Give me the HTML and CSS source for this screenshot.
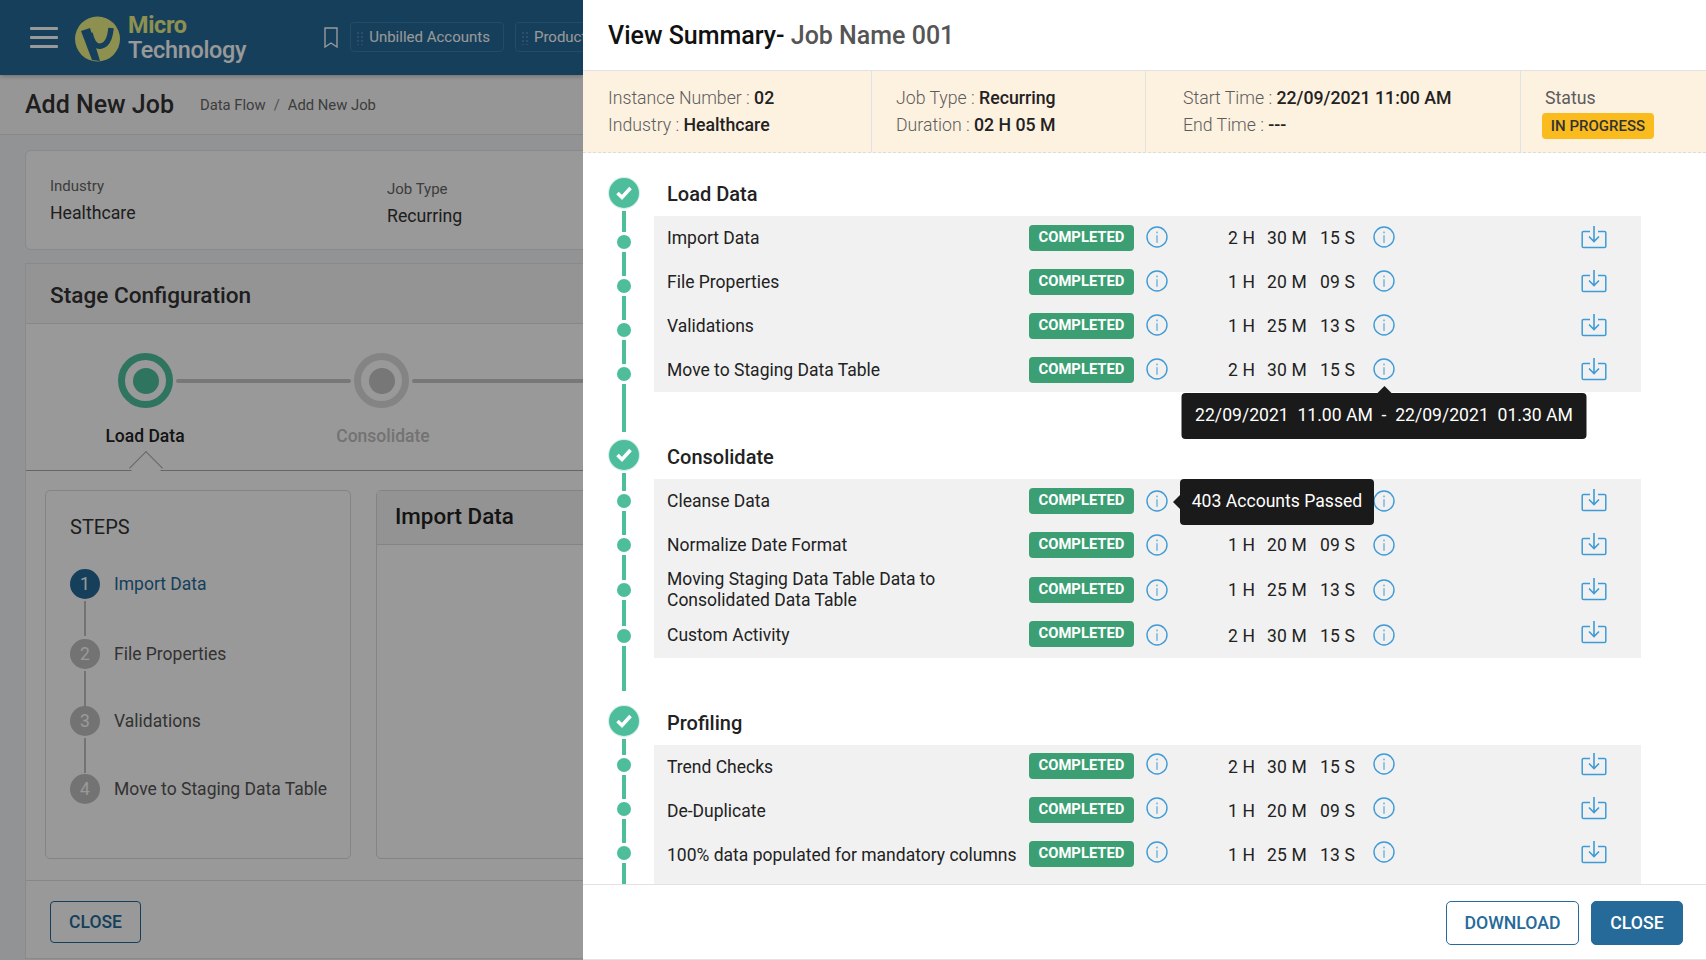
FILE: index.html
```html
<!DOCTYPE html>
<html lang="en">
<head>
    <meta charset="UTF-8">
    <meta name="viewport" content="width=device-width, initial-scale=1.0">
    <title>Add New Job</title>
    <link rel="stylesheet" href="styles.css">
</head>
<body>
    <svg class="sprite" width="0" height="0">
        <symbol id="info" viewBox="0 0 22 22">
            <circle cx="11" cy="11" r="10" fill="none" stroke="#3f9bd6" stroke-width="1.4"/>
            <rect x="10.3" y="9.2" width="1.4" height="7.6" fill="#6fb3de"/>
            <rect x="10.2" y="5.6" width="1.6" height="1.7" fill="#6fb3de"/>
        </symbol>
        <symbol id="download" viewBox="0 0 26 24">
            <path d="M9 6.5H2.5a1.3 1.3 0 0 0-1.3 1.3v13.4a1.3 1.3 0 0 0 1.3 1.3h21a1.3 1.3 0 0 0 1.3-1.3V7.8a1.3 1.3 0 0 0-1.3-1.3H17" fill="none" stroke="#3f9bd6" stroke-width="1.5"/>
            <path d="M13 1v15.5M8 11.5l5 5 5-5" fill="none" stroke="#3f9bd6" stroke-width="1.6"/>
        </symbol>
    </svg>

    <div class="page">
        <header class="topbar">
            <div class="hamburger"><span></span><span></span><span></span></div>
            <svg class="logo-mark" width="45" height="46" viewBox="0 0 45 46">
                <circle cx="22.5" cy="23" r="22.5" fill="#edf186"/>
                <path d="M6 15l9-3 10 33-8-1z" fill="#256a99"/>
                <path d="M15 17c2 9 6 14 11 13 6-1 9-7 10-18" fill="none" stroke="#256a99" stroke-width="5.5"/>
            </svg>
            <div class="logo-text">
                <span class="logo-micro">Micro</span>
                <span class="logo-tech">Technology</span>
            </div>
            <svg class="bookmark" width="16" height="22" viewBox="0 0 16 22">
                <path d="M2 1h12v19l-6-4-6 4z" fill="none" stroke="#fff" stroke-width="1.4"/>
            </svg>
            <div class="chip"><span class="grip"></span>Unbilled Accounts</div>
            <div class="chip"><span class="grip"></span>Product</div>
        </header>

        <div class="subheader">
            <h1>Add New Job</h1>
            <div class="breadcrumb">Data Flow<span class="crumb-sep">/</span>Add New Job</div>
        </div>

        <div class="card job-info">
            <div class="job-field">
                <label>Industry</label>
                <span>Healthcare</span>
            </div>
            <div class="job-field job-field-low">
                <label>Job Type</label>
                <span>Recurring</span>
            </div>
        </div>

        <div class="card stage-card">
            <div class="stage-title">Stage Configuration</div>
            <div class="stepper">
                <div class="stepper-track">
                    <div class="stage-dot stage-dot-active"></div>
                    <div class="stage-line"></div>
                    <div class="stage-dot"></div>
                    <div class="stage-line stage-line-long"></div>
                </div>
                <div class="stepper-labels">
                    <span class="stage-label stage-label-active">Load Data</span>
                    <span class="stage-label">Consolidate</span>
                </div>
                <div class="stage-caret"></div>
            </div>
            <div class="stage-body">
                <div class="steps-card">
                    <h3>STEPS</h3>
                    <div class="step step-active"><span class="step-num">1</span>Import Data</div>
                    <div class="step"><span class="step-num">2</span>File Properties</div>
                    <div class="step"><span class="step-num">3</span>Validations</div>
                    <div class="step step-last"><span class="step-num">4</span>Move to Staging Data Table</div>
                </div>
                <div class="import-card">
                    <div class="import-title">Import Data</div>
                </div>
            </div>
            <div class="stage-footer">
                <button class="btn-close-dim">CLOSE</button>
            </div>
        </div>
    </div>

    <div class="overlay"></div>

    <aside class="drawer">
        <div class="drawer-header">View Summary- <span class="job-name">Job Name 001</span></div>

        <div class="summary">
            <div class="summary-cell cell-a">
                <div>Instance Number : <b>02</b></div>
                <div>Industry : <b>Healthcare</b></div>
            </div>
            <div class="summary-cell cell-b">
                <div>Job Type : <b>Recurring</b></div>
                <div>Duration : <b>02 H 05 M</b></div>
            </div>
            <div class="summary-cell cell-c">
                <div>Start Time : <b>22/09/2021 11:00 AM</b></div>
                <div>End Time : <b>---</b></div>
            </div>
            <div class="summary-cell cell-d">
                <div>Status</div>
                <span class="badge-progress">IN PROGRESS</span>
            </div>
        </div>

        <div class="drawer-body">
            <section class="stage stage-first">
                <div class="stage-head">
                    <div class="rail"><span class="check"><svg width="18" height="16" viewBox="0 0 18 16"><path d="M2.5 8l4.5 4.5L15.5 3" fill="none" stroke="#fff" stroke-width="3.6"/></svg></span><span class="seg"></span></div>
                    <h4>Load Data</h4>
                </div>
                <div class="row">
                    <div class="rail"><span class="seg"></span><span class="dot"></span><span class="seg"></span></div>
                    <div class="row-body">
                        <div class="row-name">Import Data</div>
                        <span class="badge">COMPLETED</span>
                        <span class="info-wrap"><svg class="icon"><use href="#info"/></svg></span>
                        <div class="time"><span>2 H</span><span>30 M</span><span>15 S</span></div>
                        <span class="info-wrap"><svg class="icon"><use href="#info"/></svg></span>
                        <svg class="icon-dl"><use href="#download"/></svg>
                    </div>
                </div>
                <div class="row">
                    <div class="rail"><span class="seg"></span><span class="dot"></span><span class="seg"></span></div>
                    <div class="row-body">
                        <div class="row-name">File Properties</div>
                        <span class="badge">COMPLETED</span>
                        <span class="info-wrap"><svg class="icon"><use href="#info"/></svg></span>
                        <div class="time"><span>1 H</span><span>20 M</span><span>09 S</span></div>
                        <span class="info-wrap"><svg class="icon"><use href="#info"/></svg></span>
                        <svg class="icon-dl"><use href="#download"/></svg>
                    </div>
                </div>
                <div class="row">
                    <div class="rail"><span class="seg"></span><span class="dot"></span><span class="seg"></span></div>
                    <div class="row-body">
                        <div class="row-name">Validations</div>
                        <span class="badge">COMPLETED</span>
                        <span class="info-wrap"><svg class="icon"><use href="#info"/></svg></span>
                        <div class="time"><span>1 H</span><span>25 M</span><span>13 S</span></div>
                        <span class="info-wrap"><svg class="icon"><use href="#info"/></svg></span>
                        <svg class="icon-dl"><use href="#download"/></svg>
                    </div>
                </div>
                <div class="row">
                    <div class="rail"><span class="seg"></span><span class="dot"></span><span class="seg"></span></div>
                    <div class="row-body">
                        <div class="row-name">Move to Staging Data Table</div>
                        <span class="badge">COMPLETED</span>
                        <span class="info-wrap"><svg class="icon"><use href="#info"/></svg></span>
                        <div class="time"><span>2 H</span><span>30 M</span><span>15 S</span></div>
                        <span class="info-wrap">
                            <svg class="icon"><use href="#info"/></svg>
                            <span class="tip tip-below">22/09/2021&nbsp; 11.00 AM &nbsp;-&nbsp; 22/09/2021&nbsp; 01.30 AM</span>
                        </span>
                        <svg class="icon-dl"><use href="#download"/></svg>
                    </div>
                </div>
                <div class="tail"><div class="rail"><span class="seg"></span></div></div>
            </section>

            <section class="stage stage-second">
                <div class="stage-head">
                    <div class="rail"><span class="check"><svg width="18" height="16" viewBox="0 0 18 16"><path d="M2.5 8l4.5 4.5L15.5 3" fill="none" stroke="#fff" stroke-width="3.6"/></svg></span><span class="seg"></span></div>
                    <h4>Consolidate</h4>
                </div>
                <div class="row">
                    <div class="rail"><span class="seg"></span><span class="dot"></span><span class="seg"></span></div>
                    <div class="row-body">
                        <div class="row-name">Cleanse Data</div>
                        <span class="badge">COMPLETED</span>
                        <span class="info-wrap">
                            <svg class="icon"><use href="#info"/></svg>
                            <span class="tip tip-right">403 Accounts Passed</span>
                        </span>
                        <div class="time"></div>
                        <span class="info-wrap"><svg class="icon"><use href="#info"/></svg></span>
                        <svg class="icon-dl"><use href="#download"/></svg>
                    </div>
                </div>
                <div class="row">
                    <div class="rail"><span class="seg"></span><span class="dot"></span><span class="seg"></span></div>
                    <div class="row-body">
                        <div class="row-name">Normalize Date Format</div>
                        <span class="badge">COMPLETED</span>
                        <span class="info-wrap"><svg class="icon"><use href="#info"/></svg></span>
                        <div class="time"><span>1 H</span><span>20 M</span><span>09 S</span></div>
                        <span class="info-wrap"><svg class="icon"><use href="#info"/></svg></span>
                        <svg class="icon-dl"><use href="#download"/></svg>
                    </div>
                </div>
                <div class="row row-tall">
                    <div class="rail"><span class="seg"></span><span class="dot"></span><span class="seg"></span></div>
                    <div class="row-body">
                        <div class="row-name row-name-wrap">Moving Staging Data Table Data to Consolidated Data Table</div>
                        <span class="badge">COMPLETED</span>
                        <span class="info-wrap"><svg class="icon"><use href="#info"/></svg></span>
                        <div class="time"><span>1 H</span><span>25 M</span><span>13 S</span></div>
                        <span class="info-wrap"><svg class="icon"><use href="#info"/></svg></span>
                        <svg class="icon-dl"><use href="#download"/></svg>
                    </div>
                </div>
                <div class="row row-end">
                    <div class="rail"><span class="seg"></span><span class="dot"></span><span class="seg"></span></div>
                    <div class="row-body row-body-raised">
                        <div class="row-name">Custom Activity</div>
                        <span class="badge">COMPLETED</span>
                        <span class="info-wrap"><svg class="icon"><use href="#info"/></svg></span>
                        <div class="time"><span>2 H</span><span>30 M</span><span>15 S</span></div>
                        <span class="info-wrap"><svg class="icon"><use href="#info"/></svg></span>
                        <svg class="icon-dl"><use href="#download"/></svg>
                    </div>
                </div>
                <div class="tail"><div class="rail"><span class="seg"></span></div></div>
            </section>

            <section class="stage stage-third">
                <div class="stage-head">
                    <div class="rail"><span class="check"><svg width="18" height="16" viewBox="0 0 18 16"><path d="M2.5 8l4.5 4.5L15.5 3" fill="none" stroke="#fff" stroke-width="3.6"/></svg></span><span class="seg"></span></div>
                    <h4>Profiling</h4>
                </div>
                <div class="row">
                    <div class="rail"><span class="seg"></span><span class="dot"></span><span class="seg"></span></div>
                    <div class="row-body row-body-raised">
                        <div class="row-name">Trend Checks</div>
                        <span class="badge">COMPLETED</span>
                        <span class="info-wrap"><svg class="icon"><use href="#info"/></svg></span>
                        <div class="time"><span>2 H</span><span>30 M</span><span>15 S</span></div>
                        <span class="info-wrap"><svg class="icon"><use href="#info"/></svg></span>
                        <svg class="icon-dl"><use href="#download"/></svg>
                    </div>
                </div>
                <div class="row">
                    <div class="rail"><span class="seg"></span><span class="dot"></span><span class="seg"></span></div>
                    <div class="row-body row-body-raised">
                        <div class="row-name">De-Duplicate</div>
                        <span class="badge">COMPLETED</span>
                        <span class="info-wrap"><svg class="icon"><use href="#info"/></svg></span>
                        <div class="time"><span>1 H</span><span>20 M</span><span>09 S</span></div>
                        <span class="info-wrap"><svg class="icon"><use href="#info"/></svg></span>
                        <svg class="icon-dl"><use href="#download"/></svg>
                    </div>
                </div>
                <div class="row">
                    <div class="rail"><span class="seg"></span><span class="dot"></span><span class="seg"></span></div>
                    <div class="row-body row-body-raised">
                        <div class="row-name">100% data populated for mandatory columns</div>
                        <span class="badge">COMPLETED</span>
                        <span class="info-wrap"><svg class="icon"><use href="#info"/></svg></span>
                        <div class="time"><span>1 H</span><span>25 M</span><span>13 S</span></div>
                        <span class="info-wrap"><svg class="icon"><use href="#info"/></svg></span>
                        <svg class="icon-dl"><use href="#download"/></svg>
                    </div>
                </div>
                <div class="row">
                    <div class="rail"><span class="seg"></span></div>
                    <div class="row-body row-body-raised">
                        <div class="row-name"></div>
                        <span class="badge">COMPLETED</span>
                    </div>
                </div>
            </section>
        </div>

        <div class="drawer-footer">
            <button class="btn-outline">DOWNLOAD</button>
            <button class="btn-solid">CLOSE</button>
        </div>
    </aside>
</body>
</html>
```

FILE: styles.css
```css
* {
    box-sizing: border-box;
}
body {
    font-family: Roboto, "Liberation Sans", sans-serif;
    background-color: #f4f6f9;
    margin: 0;
    width: 1706px;
    height: 960px;
    overflow: hidden;
    position: relative;
    color: #222;
}
.sprite {
    display: block;
    height: 0;
}
.page {
    width: 583px;
    height: 960px;
    overflow: hidden;
}

/* top bar */
.topbar {
    height: 75px;
    background-color: #256a99;
    display: flex;
    align-items: center;
    padding-left: 30px;
    box-shadow: 0 1px 5px rgba(0, 0, 0, 0.3);
    position: relative;
}
.hamburger {
    width: 28px;
    height: 21px;
    display: flex;
    flex-direction: column;
    justify-content: space-between;
    flex: none;
}
.hamburger span {
    height: 3px;
    background-color: #fff;
    border-radius: 1px;
}
.logo-mark {
    margin-left: 17px;
    margin-top: 3px;
    flex: none;
}
.logo-text {
    margin-left: 8px;
    display: flex;
    flex-direction: column;
    font-weight: 500;
    font-size: 23.4px;
    line-height: 25px;
    margin-top: 1px;
    letter-spacing: -0.3px;
    flex: none;
}
.logo-micro {
    color: #edf186;
    font-weight: 700;
}
.logo-tech {
    color: #fff;
}
.bookmark {
    margin-left: 77px;
    margin-top: 1px;
    flex: none;
}
.chip {
    height: 30px;
    margin-left: 11px;
    padding: 0 13px 0 18px;
    border: 1px solid #3a7fae;
    border-radius: 4px;
    color: #fff;
    font-size: 15px;
    line-height: 29px;
    white-space: nowrap;
    position: relative;
    margin-top: -1px;
    flex: none;
}
.chip + .chip {
    margin-left: 11px;
}
.grip {
    position: absolute;
    left: 5px;
    top: 8px;
    width: 7px;
    height: 14px;
    background-image: radial-gradient(#4a86b0 1.2px, transparent 1.3px);
    background-size: 4px 4px;
}

/* page heading */
.subheader {
    height: 60px;
    background-color: #fbfbfb;
    border-bottom: 1px solid #e2e2e2;
    display: flex;
    align-items: center;
    padding-left: 25px;
}
.subheader h1 {
    margin: 0;
    font-size: 25px;
    font-weight: 500;
    color: #333;
}
.breadcrumb {
    margin-left: 26px;
    font-size: 14.8px;
    color: #666;
}
.crumb-sep {
    margin: 0 8px;
    color: #888;
}
.card {
    background-color: #fff;
    border: 1px solid #e6e6e6;
    border-radius: 6px;
    margin: 0 0 0 25px;
    width: 700px;
}
.job-info {
    margin-top: 15px;
    height: 100px;
    display: flex;
    padding: 26px 0 0 24px;
}
.job-field {
    width: 338px;
    display: flex;
    flex-direction: column;
    gap: 8px;
}
.job-field-low {
    padding-top: 3px;
}
.job-field label {
    font-size: 15px;
    color: #666;
}
.job-field span {
    font-size: 17.7px;
    color: #333;
}

/* stage configuration */
.stage-card {
    margin-top: 13px;
    height: 696px;
    border-radius: 0;
}
.stage-title {
    height: 60px;
    background-color: #f7f7f7;
    border-bottom: 1px solid #e2e2e2;
    padding: 18px 24px 0;
    font-size: 22.6px;
    font-weight: 500;
    color: #333;
}
.stepper {
    height: 147px;
    padding: 29px 0 0 92px;
    border-bottom: 1px solid #aaa;
    position: relative;
}
.stepper-track {
    display: flex;
    align-items: center;
}
.stage-dot {
    width: 55px;
    height: 55px;
    border-radius: 50%;
    border: 7px solid #dcdcdc;
    display: flex;
    align-items: center;
    justify-content: center;
    flex: none;
}
.stage-dot::after {
    content: "";
    width: 26px;
    height: 26px;
    border-radius: 50%;
    background-color: #c6c6c6;
}
.stage-dot-active {
    border-color: #4fc29f;
}
.stage-dot-active::after {
    background-color: #4fc29f;
}
.stage-line {
    width: 175px;
    height: 4px;
    margin: 0 3px;
    background-color: #c8c8c8;
    border-radius: 2px;
    flex: none;
}
.stage-line-long {
    width: 400px;
}
.stepper-labels {
    display: flex;
    margin: 18px 0 0 -92px;
}
.stage-label {
    width: 238px;
    text-align: center;
    font-size: 17.5px;
    font-weight: 500;
    color: #c0c0c0;
}
.stage-label-active {
    color: #222;
}
.stage-caret {
    position: absolute;
    left: 108px;
    bottom: -10px;
    width: 24px;
    height: 24px;
    background-color: #fff;
    border-left: 1px solid #aaa;
    border-top: 1px solid #aaa;
    transform: rotate(45deg);
}
.stage-body {
    display: flex;
    gap: 25px;
    padding: 19px 0 20px 19px;
    height: 410px;
    border-bottom: 1px solid #e2e2e2;
    position: relative;
}
.steps-card,
.import-card {
    height: 369px;
    border: 1px solid #ddd;
    border-radius: 5px;
}
.steps-card {
    width: 306px;
    flex: none;
    padding: 24px 0 0 24px;
}
.steps-card h3 {
    margin: 0 0 30px;
    font-size: 20px;
    font-weight: 400;
    line-height: 24px;
    color: #333;
}
.step {
    display: flex;
    align-items: center;
    height: 30px;
    margin-bottom: 37.5px;
    font-size: 17.5px;
    color: #555;
    position: relative;
}
.step-active {
    margin-bottom: 39.5px;
}
.step-last {
    margin-bottom: 0;
}
.step::after {
    content: "";
    position: absolute;
    left: 14px;
    top: 32px;
    width: 2px;
    height: 35px;
    background-color: #c0c0c0;
}
.step-last::after {
    display: none;
}
.step-num {
    width: 30px;
    height: 30px;
    border-radius: 50%;
    background-color: #c0c0c0;
    color: #fff;
    text-align: center;
    line-height: 30px;
    margin-right: 14px;
    flex: none;
}
.step-active {
    color: #256a99;
}
.step-active .step-num {
    background-color: #256a99;
}
.import-card {
    width: 600px;
    flex: none;
}
.import-title {
    height: 54px;
    background-color: #f5f5f5;
    border-bottom: 1px solid #ddd;
    padding: 12px 0 0 18px;
    font-size: 22.4px;
    font-weight: 500;
    color: #222;
}
.stage-footer {
    padding: 20px 0 0 24px;
}
.btn-close-dim {
    width: 91px;
    height: 42px;
    background-color: transparent;
    border: 1px solid #256a99;
    border-radius: 4px;
    color: #256a99;
    font-family: inherit;
    font-size: 17.5px;
    font-weight: 500;
}
.overlay {
    position: absolute;
    left: 0;
    top: 0;
    width: 100%;
    height: 100%;
    background-color: rgba(0, 0, 0, 0.4);
}

/* summary drawer */
.drawer {
    position: absolute;
    left: 583px;
    top: 0;
    width: 1123px;
    height: 960px;
    background-color: #fff;
    display: flex;
    flex-direction: column;
    border-bottom: 1px solid #e2e2e2;
}
.drawer-header {
    height: 71px;
    flex: none;
    padding: 21px 0 0 25px;
    font-size: 25px;
    line-height: 30px;
    font-weight: 500;
    color: #111;
    border-bottom: 1px solid #e2e2e2;
}
.job-name {
    color: #555;
}
.summary {
    height: 82px;
    flex: none;
    display: flex;
    background-color: #fdf1e0;
    border-bottom: 1px dashed #ddd;
    font-size: 17.7px;
    color: #5c5c5c;
    font-weight: 300;
}
.summary b {
    font-weight: 500;
    color: #222;
}
.summary-cell {
    padding: 14px 0 0 25px;
    line-height: 27px;
    border-right: 1px solid #dfe3e6;
    flex: none;
}
.cell-a {
    width: 289px;
}
.cell-b {
    width: 274px;
    padding-left: 24px;
}
.cell-c {
    width: 375px;
    padding-left: 37px;
}
.cell-d {
    border-right: 0;
    padding-left: 24px;
    font-weight: 400;
}
.badge-progress {
    display: block;
    width: 112px;
    height: 26px;
    margin: 1px 0 0 -3px;
    background-color: #f9bb1e;
    border-radius: 4px;
    text-align: center;
    font-size: 15px;
    line-height: 26px;
    font-weight: 500;
    color: #333;
}
.drawer-body {
    flex: 1;
    overflow: hidden;
    padding: 25px 65px 0 26px;
}
.rail {
    width: 30px;
    flex: none;
    margin-right: 15px;
    display: flex;
    flex-direction: column;
    align-items: center;
    gap: 3px;
}
.seg {
    flex: 1;
    width: 4px;
    background-color: #4ebd9b;
}
.dot {
    width: 14px;
    height: 14px;
    border-radius: 50%;
    background-color: #4ebd9b;
    flex: none;
}
.stage-first .row .seg:first-child {
    flex: none;
    height: 16px;
}
.stage-third .row .seg:first-child {
    flex: none;
    height: 10px;
}
.stage-third .row:last-child .seg:first-child {
    flex: 1;
}
.check {
    width: 30px;
    height: 30px;
    border-radius: 50%;
    background-color: #4ebd9b;
    box-shadow: 0 0 0 1px #d5f0e7;
    display: flex;
    align-items: center;
    justify-content: center;
    flex: none;
}
.stage-head {
    height: 39px;
    display: flex;
}
.stage-head h4 {
    margin: 5px 0 0 13px;
    font-size: 20px;
    line-height: 24px;
    font-weight: 500;
    color: #222;
}
.stage-first .stage-head {
    height: 38px;
}
.stage-first .stage-head h4 {
    margin-top: 4px;
}
.row {
    display: flex;
    height: 44px;
}
.row-tall {
    height: 46px;
}
.row-end {
    height: 45px;
}
.row-body {
    flex: 1;
    display: flex;
    align-items: center;
    padding-left: 13px;
    background-color: #f1f1f1;
    position: relative;
}
.row-name {
    width: 362px;
    flex: none;
    font-size: 17.5px;
    line-height: 21px;
    color: #222;
    padding-right: 60px;
    white-space: nowrap;
}
.row-name-wrap {
    white-space: normal;
}
.badge {
    width: 105px;
    height: 26px;
    flex: none;
    background-color: #3c9f74;
    border-radius: 4px;
    color: #fff;
    text-align: center;
    font-size: 14.8px;
    line-height: 25px;
    font-weight: 700;
}
.info-wrap {
    position: relative;
    width: 22px;
    height: 22px;
    flex: none;
    margin-bottom: 2px;
}
.badge + .info-wrap {
    margin-left: 12px;
}
.stage-second .info-wrap {
    margin-bottom: 0;
}
.row-body-raised .badge {
    margin-bottom: 3px;
}
.stage-third .info-wrap,
.stage-third .icon-dl {
    margin-bottom: 7px;
}
.stage-second .row-body-raised .info-wrap {
    margin-bottom: 2px;
}
.stage-second .row-body-raised .icon-dl {
    margin-bottom: 7px;
}
.icon {
    width: 22px;
    height: 22px;
    display: block;
}
.time {
    width: 145px;
    margin-left: 60px;
    display: flex;
    font-size: 17.5px;
    letter-spacing: 0.2px;
    color: #222;
    flex: none;
}
.time span:nth-child(1) {
    width: 39px;
}
.time span:nth-child(2) {
    width: 53px;
}
.icon-dl {
    width: 26px;
    height: 24px;
    margin-left: 186px;
    margin-bottom: 3px;
    flex: none;
}
.tail {
    height: 48px;
    display: flex;
}
.tail .rail {
    height: 40px;
}
.stage-second .tail .rail {
    height: 33px;
}
.tip {
    position: absolute;
    height: 46px;
    background-color: #1a1a1a;
    border-radius: 4px;
    color: #fff;
    font-size: 17.6px;
    line-height: 45px;
    text-align: center;
    white-space: nowrap;
    z-index: 2;
}
.tip::before {
    content: "";
    position: absolute;
    border: 7px solid transparent;
}
.tip-below {
    top: 35px;
    left: 50%;
    transform: translateX(-50%);
    width: 405px;
}
.tip-below::before {
    top: -7px;
    left: 50%;
    margin-left: -7px;
    border-top: 0;
    border-bottom-color: #1a1a1a;
}
.tip-right {
    top: -11px;
    left: 34px;
    width: 194px;
}
.tip-right::before {
    left: -7px;
    top: 16px;
    border-left: 0;
    border-right-color: #1a1a1a;
}
.drawer-footer {
    height: 75px;
    flex: none;
    background-color: #fff;
    border-top: 1px solid #e2e2e2;
    display: flex;
    justify-content: flex-end;
    gap: 12px;
    padding: 16px 23px 0 0;
    position: relative;
}
.btn-outline,
.btn-solid {
    height: 44px;
    border: 1px solid #256a99;
    border-radius: 5px;
    font-family: inherit;
    font-size: 17.7px;
    font-weight: 500;
}
.btn-outline {
    width: 133px;
    background-color: #fff;
    color: #256a99;
}
.btn-solid {
    width: 92px;
    background-color: #256a99;
    color: #fff;
}
```
